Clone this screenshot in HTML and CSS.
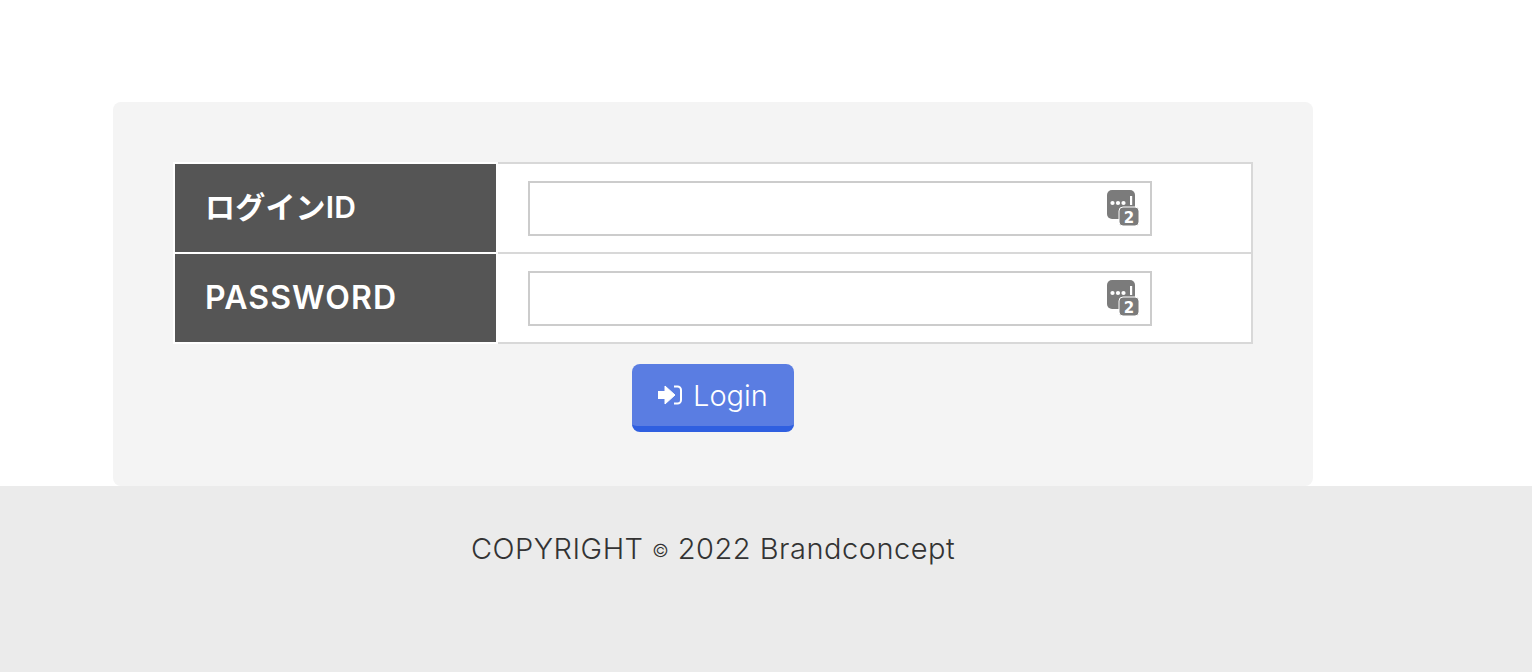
FILE: index.html
```html
<!DOCTYPE html>
<html lang="ja">
<head>
    <meta charset="UTF-8">
    <meta name="viewport" content="width=device-width, initial-scale=1.0">
    <title>Login</title>
    <link rel="stylesheet" href="styles.css">
</head>
<body>
    <div class="main">
        <form class="login-box" action="#" method="post">
            <table class="login-table">
                <tr>
                    <th class="th-id">ログインID</th>
                    <td>
                        <div class="field">
                            <input type="text" name="login_id">
                            <svg class="key-icon" viewBox="0 0 33 37" width="33" height="37">
                                <rect x="0" y="0" width="28" height="29" rx="5" fill="#7b7b7b"/>
                                <circle cx="5.500" cy="13" r="2.100" fill="#fff"/>
                                <circle cx="11" cy="13" r="2.100" fill="#fff"/>
                                <circle cx="16.500" cy="13" r="2.100" fill="#fff"/>
                                <rect x="23" y="6" width="2.200" height="9" fill="#fff"/>
                                <rect x="12" y="17" width="20" height="19" rx="4" fill="#7b7b7b" stroke="#fff" stroke-width="1"/>
                                <text x="22" y="33" class="key-num">2</text>
                            </svg>
                        </div>
                    </td>
                </tr>
                <tr>
                    <th class="th-pass">PASSWORD</th>
                    <td>
                        <div class="field">
                            <input type="password" name="password">
                            <svg class="key-icon" viewBox="0 0 33 37" width="33" height="37">
                                <rect x="0" y="0" width="28" height="29" rx="5" fill="#7b7b7b"/>
                                <circle cx="5.500" cy="13" r="2.100" fill="#fff"/>
                                <circle cx="11" cy="13" r="2.100" fill="#fff"/>
                                <circle cx="16.500" cy="13" r="2.100" fill="#fff"/>
                                <rect x="23" y="6" width="2.200" height="9" fill="#fff"/>
                                <rect x="12" y="17" width="20" height="19" rx="4" fill="#7b7b7b" stroke="#fff" stroke-width="1"/>
                                <text x="22" y="33" class="key-num">2</text>
                            </svg>
                        </div>
                    </td>
                </tr>
            </table>
            <div class="btn-wrap">
                <button class="login-btn" type="submit">
                    <svg class="login-icon" viewBox="0 0 25 22" width="25" height="22">
                        <path d="M0 7.500h7V2l10 9-10 9v-5.500H0z" fill="#fff" stroke="#fff" stroke-width="1" stroke-linejoin="round"/>
                        <path d="M16 2.500h3.500a3.500 3.500 0 0 1 3.500 3.500v10a3.500 3.500 0 0 1-3.500 3.500H16" fill="none" stroke="#fff" stroke-width="2"/>
                    </svg>
                    <span class="login-text">Login</span>
                </button>
            </div>
        </form>
    </div>
    <div class="footer">
        <p class="copyright">COPYRIGHT <span class="copy-mark">©</span> 2022 Brandconcept</p>
    </div>
</body>
</html>
```

FILE: styles.css
```css
body {
    margin: 0;
    padding: 0;
    background-color: #fff;
    font-family: "Inter", "Noto Sans CJK JP", sans-serif;
}

.main {
    padding: 102px 0 0 113px;
}

.login-box {
    box-sizing: border-box;
    width: 1200px;
    height: 384px;
    padding: 60px 60px 0 60px;
    background-color: #f4f4f4;
    border-radius: 8px;
}

.login-table {
    width: 1080px;
    border-collapse: collapse;
    background-color: #fff;
}

.login-table th {
    box-sizing: border-box;
    width: 323px;
    height: 90px;
    padding: 0 0 2px 30px;
    border: 2px solid #fff;
    background-color: #555;
    color: #fff;
    font-family: "Inter", "Noto Sans CJK JP", sans-serif;
    font-size: 30px;
    font-weight: 600;
    text-align: left;
}

.login-table .th-id {
    padding-bottom: 6px;
    letter-spacing: 0.2px;
}

.login-table .th-pass {
    font-size: 32px;
    letter-spacing: 1.1px;
}

.login-table td {
    padding: 0 0 0 30px;
    border: 2px solid #d8d8d8;
}

.field {
    position: relative;
    width: 624px;
    height: 55px;
}

.field input {
    display: block;
    box-sizing: border-box;
    width: 100%;
    height: 100%;
    margin: 0;
    padding: 0 10px;
    border: 2px solid #ccc;
    background-color: #fff;
}

.key-icon {
    position: absolute;
    top: 9px;
    right: 12px;
}

.key-num {
    fill: #fff;
    font-family: "DejaVu Sans", sans-serif;
    font-size: 15px;
    font-weight: bold;
    text-anchor: middle;
}

.btn-wrap {
    width: 1080px;
    padding-top: 20px;
    text-align: center;
}

.login-btn {
    display: inline-flex;
    align-items: center;
    justify-content: center;
    gap: 10px;
    box-sizing: border-box;
    width: 162px;
    height: 68px;
    padding: 0;
    border: none;
    border-bottom: 6px solid #2f5fe0;
    border-radius: 8px;
    background-color: #5a7de2;
    color: #fff;
    font-family: "Inter", "Liberation Sans", sans-serif;
    font-size: 29px;
    font-weight: 300;
    cursor: pointer;
}

.footer {
    height: 186px;
    padding-left: 113px;
    background-color: #ebebeb;
}

.copyright {
    width: 1200px;
    margin: 0;
    padding-top: 42px;
    color: #333;
    font-family: "Inter", "Liberation Sans", sans-serif;
    font-size: 29px;
    font-weight: 300;
    letter-spacing: 0.5px;
    line-height: 42px;
    text-align: center;
}

.copy-mark {
    font-size: 18px;
    vertical-align: 2px;
}
```
